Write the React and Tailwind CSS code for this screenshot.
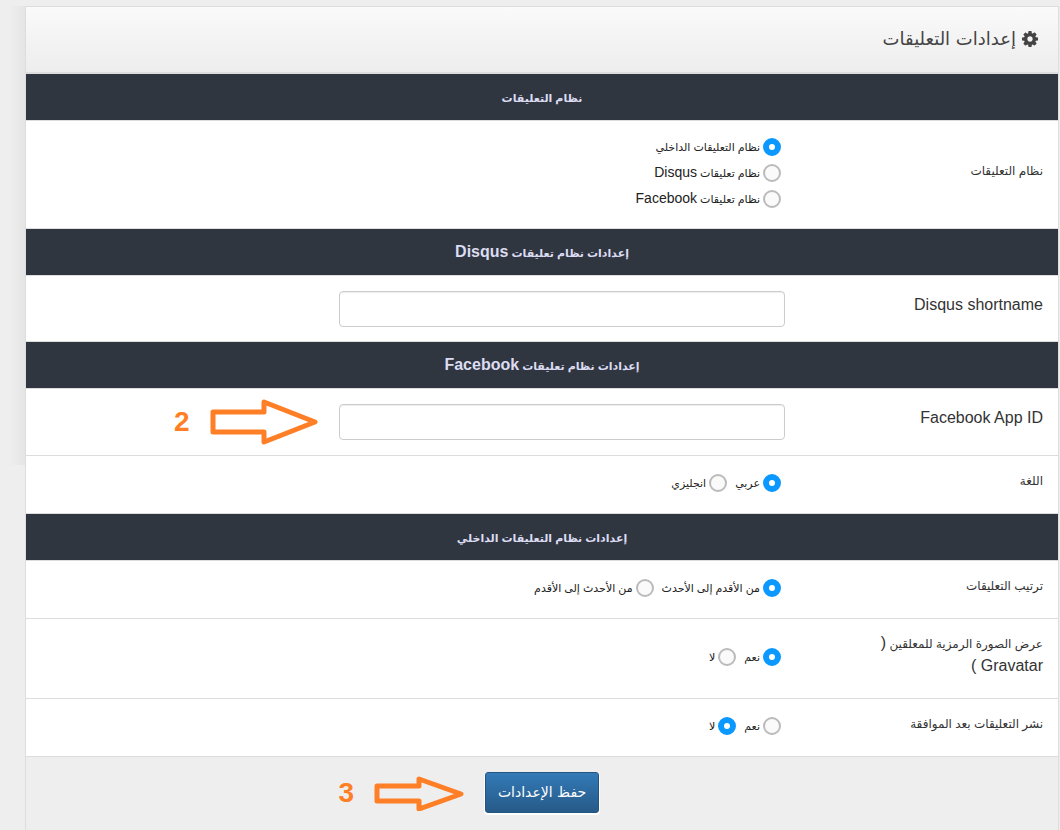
import React from "react";

const ARABIC = /([\u0600-\u06FF][\u0600-\u06FF ]*)/;

// Arabic glyphs are wide next to the Latin ones, so each script gets its own size
function Mixed({ children, arabic }) {
	return children.split(ARABIC).map((part, i) =>
		i % 2 ? (
			<span key={i} className={arabic}>
				{part}
			</span>
		) : (
			part
		),
	);
}

function GearIcon({ className }) {
	return (
		<svg viewBox="0 128 1536 1536" fill="currentColor" className={className} aria-hidden="true">
			<path d="M1024 896q0-106-75-181t-181-75-181 75-75 181 75 181 181 75 181-75 75-181zm512-109v222q0 12-8 23t-20 13l-185 28q-19 54-39 91 35 50 107 138 10 12 10 25t-9 23q-27 37-99 108t-94 71q-12 0-26-9l-138-108q-44 23-91 38-16 136-29 186-7 28-36 28h-222q-14 0-24.5-8.5t-11.5-21.5l-28-184q-49-16-90-37l-141 107q-10 9-25 9-14 0-25-11-126-114-165-168-7-10-7-23 0-12 8-23 15-21 51-66.5t54-70.5q-27-50-41-99l-183-27q-13-2-21-12.5t-8-23.5v-222q0-12 8-23t19-13l186-28q14-46 39-92-40-57-107-138-10-12-10-24 0-10 9-23 26-36 98.5-107.5t94.5-71.5q13 0 26 10l138 107q44-23 91-38 16-136 29-186 7-28 36-28h222q14 0 24.5 8.5t11.5 21.5l28 184q49 16 90 37l142-107q9-9 24-9 13 0 25 10 129 119 165 170 7 8 7 22 0 12-8 23-15 21-51 66.5t-54 70.5q26 50 41 98l183 28q13 2 21 12.5t8 23.5z" />
		</svg>
	);
}

function SectionTitle({ children }) {
	return (
		<h2 className="flex h-[47px] items-center justify-center border-b border-[#ddd] bg-[#2f363f] text-base font-bold text-[#dcdcf2]">
			<span>
				<Mixed arabic="text-[11px]">{children}</Mixed>
			</span>
		</h2>
	);
}

function Row({ id, label, htmlFor, height, children }) {
	const Label = htmlFor ? "label" : "div";
	return (
		<div className={`flex items-center border-b border-[#ddd] bg-white ${height}`}>
			<Label
				id={id}
				htmlFor={htmlFor}
				className="w-1/4 px-[15px] pb-2 text-base leading-[22px] text-[#333]">
				{label.split("\n").map((line) => (
					<span key={line} className="block">
						<Mixed arabic="text-[12px]">{line}</Mixed>
					</span>
				))}
			</Label>
			<div className="w-3/4 px-[15px]">{children}</div>
		</div>
	);
}

function RadioGroup({ name, options, selected, vertical }) {
	return (
		<div
			role="radiogroup"
			aria-labelledby={name}
			className={vertical ? "flex flex-col items-start px-1 pb-[3px]" : "flex gap-2 px-1 pb-[3px]"}>
			{options.map((option, i) => (
				<label
					key={option}
					className="flex h-[26px] items-center gap-[3px] text-sm text-[#222]">
					<input
						type="radio"
						name={name}
						defaultChecked={i === selected}
						className="size-[18px] shrink-0 appearance-none rounded-full border-2 border-[#bbb] bg-[#fafafa] checked:border-6 checked:border-[#0b98ff] checked:bg-white"
					/>
					<span className="pb-[2px]">
						<Mixed arabic="text-[11px]">{option}</Mixed>
					</span>
				</label>
			))}
		</div>
	);
}

function TextField({ id, children }) {
	return (
		<div className="relative w-3/5">
			<input
				id={id}
				type="text"
				className="block h-9 w-full rounded border border-[#ccc] bg-white px-3 shadow-[inset_0_1px_1px_rgba(0,0,0,0.075)]"
			/>
			{children}
		</div>
	);
}

// Orange number with an arrow, hanging to the left of a control
function Step({ number, width, height, path }) {
	return (
		<div
			dir="ltr"
			className="absolute top-1/2 right-full mr-[21px] flex -translate-y-1/2 items-center gap-5 text-[28px] leading-none font-bold text-[#ff7f27]">
			<span>{number}</span>
			<svg width={width} height={height} fill="none" stroke="currentColor" strokeWidth="5" strokeLinejoin="round">
				<path d={path} />
			</svg>
		</div>
	);
}

export default function App() {
	return (
		<div className="flex min-h-screen bg-[#eee] pt-[6px] pr-px font-['Liberation_Sans','DejaVu_Sans',sans-serif]">
			<div className="h-[459px] w-[25px] shrink-0 bg-linear-to-r from-[#eee] from-40% to-[#e5e5e5]" />
			<form
				dir="rtl"
				className="min-w-0 grow border border-b-0 border-[#ddd]"
				onSubmit={(e) => e.preventDefault()}>
				<h1 className="flex h-[67px] items-center gap-[6px] border-b-2 border-[#ddd] bg-linear-to-b from-[#fafafa] to-[#ededed] px-5 pb-[2px] font-['DejaVu_Sans',sans-serif] text-[18px] text-[#444]">
					<GearIcon className="size-4" />
					<span>إعدادات التعليقات</span>
				</h1>

				<SectionTitle>نظام التعليقات</SectionTitle>
				<Row id="system" label="نظام التعليقات" height="h-[108px]">
					<RadioGroup
						name="system"
						options={["نظام التعليقات الداخلي", "نظام تعليقات Disqus", "نظام تعليقات Facebook"]}
						selected={0}
						vertical
					/>
				</Row>

				<SectionTitle>إعدادات نظام تعليقات Disqus</SectionTitle>
				<Row label="Disqus shortname" htmlFor="disqus" height="h-[66px]">
					<TextField id="disqus" />
				</Row>

				<SectionTitle>إعدادات نظام تعليقات Facebook</SectionTitle>
				<Row label="Facebook App ID" htmlFor="facebook" height="h-[67px]">
					<TextField id="facebook">
						<Step number="2" width="108" height="46" path="M3 13H54V3L105 23L54 43V33H3Z" />
					</TextField>
				</Row>
				<Row id="language" label="اللغة" height="h-[58px]">
					<RadioGroup name="language" options={["عربي", "انجليزي"]} selected={0} />
				</Row>

				<SectionTitle>إعدادات نظام التعليقات الداخلي</SectionTitle>
				<Row id="order" label="ترتيب التعليقات" height="h-[58px]">
					<RadioGroup
						name="order"
						options={["من الأقدم إلى الأحدث", "من الأحدث إلى الأقدم"]}
						selected={0}
					/>
				</Row>
				<Row
					id="gravatar"
					label={"عرض الصورة الرمزية للمعلقين (\nGravatar )"}
					height="h-[80px]">
					<RadioGroup name="gravatar" options={["نعم", "لا"]} selected={0} />
				</Row>
				<Row id="approval" label="نشر التعليقات بعد الموافقة" height="h-[58px]">
					<RadioGroup name="approval" options={["نعم", "لا"]} selected={1} />
				</Row>

				<div className="flex justify-center bg-[#eee] py-[15px]">
					<div className="relative">
						<button
							type="submit"
							className="h-[41px] w-[114px] rounded-[3px] border border-[#245580] bg-linear-to-b from-[#337ab7] to-[#265a88] pb-[2px] font-['DejaVu_Sans',sans-serif] text-sm text-white shadow-[0_1px_0_1px_#fff]">
							حفظ الإعدادات
						</button>
						<Step number="3" width="90" height="36" path="M3 11H45V4L87 19L45 34V26H3Z" />
					</div>
				</div>
			</form>
		</div>
	);
}
